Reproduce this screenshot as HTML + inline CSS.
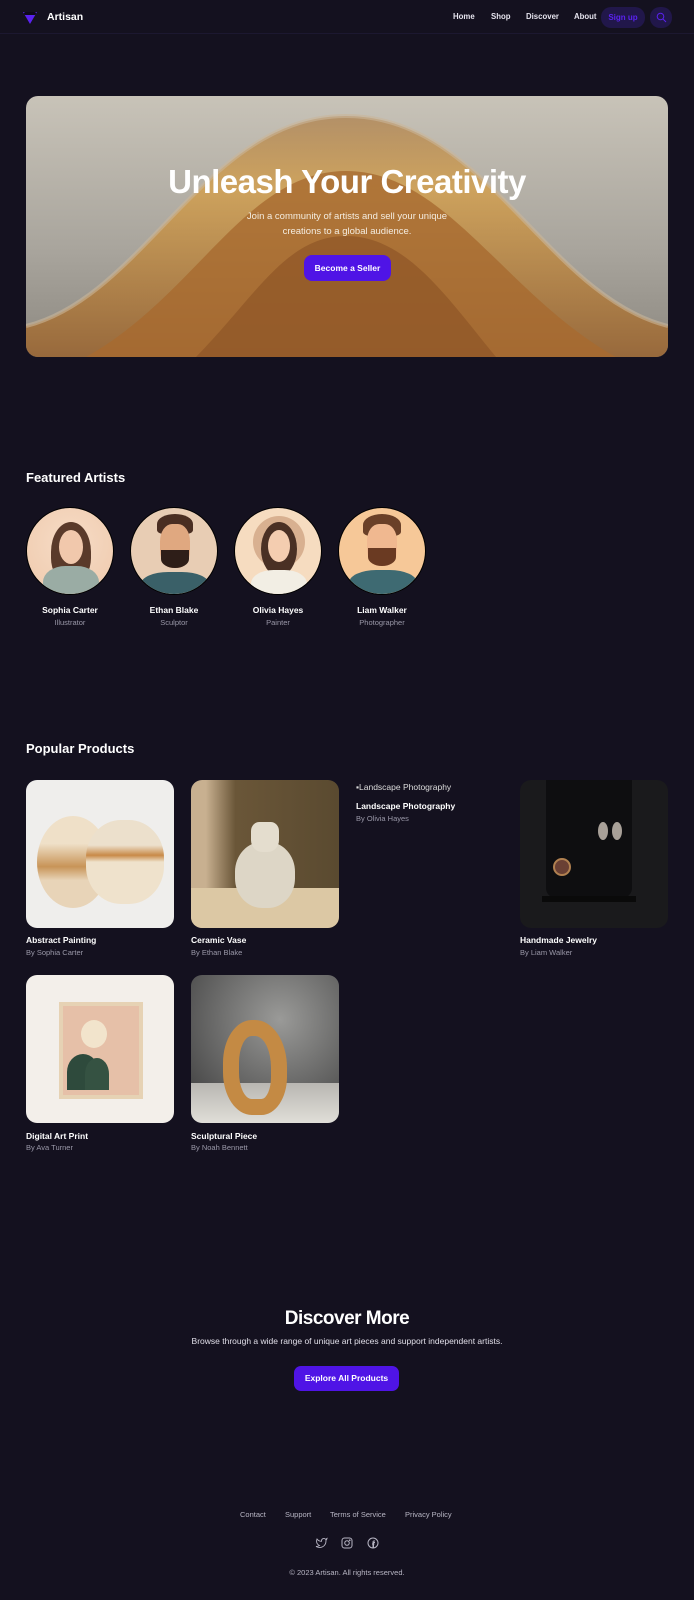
<!DOCTYPE html>
<html><head><meta charset="utf-8"><style>
*{margin:0;padding:0;box-sizing:border-box}
body{width:694px;height:1600px;background:#14111f;font-family:"Liberation Sans",sans-serif;color:#fff;position:relative;overflow:hidden}
.a{position:absolute}
.nav a{position:absolute;top:12px;font-size:7.8px;color:#e6e4ee;font-weight:bold}
h2{position:absolute;left:26px;font-size:13px;font-weight:bold}
.av{position:absolute;top:507px;width:88px;height:88px;border-radius:50%;border:1px solid #000;overflow:hidden}
.nm{position:absolute;top:605px;width:88px;text-align:center;font-size:8.5px;font-weight:bold}
.rl{position:absolute;top:618px;width:88px;text-align:center;font-size:7.5px;color:#9a98a8}
.card{position:absolute;width:148px;height:148px;border-radius:11px;overflow:hidden}
.t{position:absolute;font-size:8.5px;font-weight:bold}
.s{position:absolute;font-size:7.5px;color:#9a98a8}
.fl{position:absolute;top:1510px;font-size:7.5px;color:#b8b6c4}
</style></head><body>
<div class="a" style="left:0;top:0;width:694px;height:34px;border-bottom:1px solid #1c1830"></div>
<svg class="a" style="left:22px;top:10px" width="16" height="15" viewBox="0 0 16 15"><path d="M1 2 L15 2 L8 14 Z" fill="#5a22ef"/><rect x="2" y="2" width="12" height="3" rx="1.5" fill="#0d0a18"/></svg>
<div class="a" style="left:47px;top:11px;font-size:10.5px;font-weight:bold">Artisan</div>
<div class="nav"><a style="left:453px">Home</a><a style="left:491px">Shop</a><a style="left:526px">Discover</a><a style="left:574px">About</a></div>
<div class="a" style="left:601px;top:7px;width:44px;height:21px;border-radius:10px;background:#21174a;color:#5a22ef;font-size:8px;font-weight:bold;text-align:center;line-height:21px">Sign up</div>
<div class="a" style="left:650px;top:7px;width:22px;height:21px;border-radius:10px;background:#21174a"></div>
<svg class="a" style="left:656px;top:12px" width="11" height="11" viewBox="0 0 11 11"><circle cx="4.5" cy="4.5" r="3.3" stroke="#5a22ef" stroke-width="1" fill="none"/><path d="M7 7 L10 10" stroke="#5a22ef" stroke-width="1"/></svg>

<div class="a" style="left:26px;top:96px;width:642px;height:261px;border-radius:12px;overflow:hidden;background:linear-gradient(#c8c3b8,#a8a49c 60%,#8c8880)">
<svg width="642" height="261" viewBox="0 0 642 261" class="a" style="left:0;top:0">
<defs><linearGradient id="g" x1="0" y1="0" x2="0" y2="1"><stop offset="0" stop-color="#b0885a"/><stop offset=".3" stop-color="#d2a050"/><stop offset="1" stop-color="#9a6430"/></linearGradient></defs>
<path d="M0 230 C120 200 180 20 320 20 C460 20 520 200 642 230 L642 261 L0 261 Z" fill="url(#g)" opacity=".85"/>
<path d="M60 261 C170 200 220 75 320 75 C420 75 480 200 590 261 Z" fill="#a86a30" opacity=".8"/>
<path d="M170 261 C230 200 260 140 320 140 C380 140 420 200 470 261 Z" fill="#8e5626" opacity=".7"/>
<path d="M0 230 C120 200 180 20 320 20 C460 20 520 200 642 230" stroke="#c9b69a" stroke-width="4" fill="none" opacity=".6"/>
</svg>
<div class="a" style="left:0;top:67px;width:642px;text-align:center;font-size:33px;font-weight:bold;letter-spacing:-0.5px">Unleash Your Creativity</div>
<div class="a" style="left:0;top:113px;width:642px;text-align:center;font-size:9.5px;line-height:15px;color:#f4ece0">Join a community of artists and sell your unique<br>creations to a global audience.</div>
<div class="a" style="left:278px;top:159px;width:87px;height:26px;border-radius:8px;background:#4f14e6;text-align:center;line-height:26px;font-size:8.5px;font-weight:bold">Become a Seller</div>
</div>

<h2 style="top:470px">Featured Artists</h2>
<div class="av" style="left:26px;background:radial-gradient(circle at 50% 40%,#f6dcc6,#efc9ac)"><div class="a" style="left:24px;top:14px;width:40px;height:60px;border-radius:50% 50% 40% 40%;background:#5a3a2a"></div><div class="a" style="left:32px;top:22px;width:24px;height:34px;border-radius:50%;background:#f1c8ac"></div><div class="a" style="left:16px;top:58px;width:56px;height:40px;border-radius:40% 40% 0 0;background:#9aaca4"></div></div>
<div class="av" style="left:130px;background:#e8cdb4"><div class="a" style="left:26px;top:6px;width:36px;height:20px;border-radius:50% 50% 20% 20%;background:#4a2e22"></div><div class="a" style="left:29px;top:16px;width:30px;height:44px;border-radius:40%;background:#e0a880"></div><div class="a" style="left:30px;top:42px;width:28px;height:18px;border-radius:0 0 50% 50%;background:#2e1e18"></div><div class="a" style="left:10px;top:64px;width:68px;height:30px;border-radius:40% 40% 0 0;background:#3a6068"></div></div>
<div class="av" style="left:234px;background:#f6dcc0"><div class="a" style="left:18px;top:8px;width:52px;height:52px;border-radius:50%;background:#d8b090"></div><div class="a" style="left:26px;top:14px;width:36px;height:54px;border-radius:50%;background:#4a3024"></div><div class="a" style="left:33px;top:22px;width:22px;height:32px;border-radius:50%;background:#f4cdb0"></div><div class="a" style="left:16px;top:62px;width:56px;height:34px;border-radius:40% 40% 0 0;background:#f2eee4"></div></div>
<div class="av" style="left:338px;background:#f6c898"><div class="a" style="left:24px;top:6px;width:38px;height:22px;border-radius:50% 50% 20% 20%;background:#6a4028"></div><div class="a" style="left:28px;top:16px;width:30px;height:42px;border-radius:40%;background:#f0b890"></div><div class="a" style="left:29px;top:40px;width:28px;height:18px;border-radius:0 0 50% 50%;background:#6a3a22"></div><div class="a" style="left:10px;top:62px;width:68px;height:32px;border-radius:40% 40% 0 0;background:#3e6a72"></div></div>
<div class="nm" style="left:26px">Sophia Carter</div><div class="rl" style="left:26px">Illustrator</div>
<div class="nm" style="left:130px">Ethan Blake</div><div class="rl" style="left:130px">Sculptor</div>
<div class="nm" style="left:234px">Olivia Hayes</div><div class="rl" style="left:234px">Painter</div>
<div class="nm" style="left:338px">Liam Walker</div><div class="rl" style="left:338px">Photographer</div>

<h2 style="top:741px">Popular Products</h2>
<div class="card" style="left:26px;top:780px;background:#efeeec"><div class="a" style="left:11px;top:36px;width:72px;height:92px;border-radius:50%;background:linear-gradient(#efe0c8 30%,#c89458 55%,#e8d4b8 70%)"></div><div class="a" style="left:60px;top:40px;width:78px;height:84px;border-radius:45%;background:linear-gradient(#ece0cc 30%,#c88a48 42%,#efe2cc 50%)"></div></div>
<div class="card" style="left:191px;top:780px;background:linear-gradient(90deg,#c8b090 0 10%,#6a5638 30%,#5a4a30);"><div class="a" style="left:0;top:108px;width:148px;height:40px;background:#dcc8a4"></div><div class="a" style="left:44px;top:62px;width:60px;height:66px;border-radius:45%;background:#ddd6c6"></div><div class="a" style="left:60px;top:42px;width:28px;height:30px;border-radius:30% 30% 40% 40%;background:#e4ddce"></div></div>
<div class="a" style="left:356px;top:782px;font-size:8.5px;color:#ddd">▪Landscape Photography</div>
<div class="t" style="left:356px;top:801px">Landscape Photography</div><div class="s" style="left:356px;top:814px">By Olivia Hayes</div>
<div class="card" style="left:520px;top:780px;background:#1a1a1c"><div class="a" style="left:26px;top:0;width:86px;height:118px;border-radius:0 0 10px 10px;background:#0e0e10"></div><div class="a" style="left:22px;top:116px;width:94px;height:6px;background:#0a0a0a"></div><div class="a" style="left:33px;top:78px;width:18px;height:18px;border-radius:50%;border:2px solid #b08050;background:#6a4034"></div><div class="a" style="left:78px;top:42px;width:10px;height:18px;border-radius:50%;background:#a8a098"></div><div class="a" style="left:92px;top:42px;width:10px;height:18px;border-radius:50%;background:#a8a098"></div></div>
<div class="t" style="left:26px;top:935px">Abstract Painting</div><div class="s" style="left:26px;top:948px">By Sophia Carter</div>
<div class="t" style="left:191px;top:935px">Ceramic Vase</div><div class="s" style="left:191px;top:948px">By Ethan Blake</div>
<div class="t" style="left:520px;top:935px">Handmade Jewelry</div><div class="s" style="left:520px;top:948px">By Liam Walker</div>

<div class="card" style="left:26px;top:975px;background:#f3efea"><div class="a" style="left:33px;top:27px;width:84px;height:97px;background:#e6d2b4;padding:4px"><div style="width:100%;height:100%;background:#e6c0a8;position:relative"><div class="a" style="left:18px;top:14px;width:26px;height:28px;border-radius:50%;background:#f2e4cc"></div><div class="a" style="left:4px;top:48px;width:32px;height:36px;border-radius:50% 50% 0 0;background:#2e4a3c"></div><div class="a" style="left:22px;top:52px;width:24px;height:32px;border-radius:50% 50% 0 0;background:#355242"></div></div></div></div>
<div class="card" style="left:191px;top:975px;background:radial-gradient(circle at 60% 30%,#9a9a98,#4a4a4a 80%)"><div class="a" style="left:0;top:108px;width:148px;height:40px;background:linear-gradient(#b8b6b2,#e0ded8)"></div><div class="a" style="left:32px;top:45px;width:64px;height:95px;border-radius:45% 50% 40% 45%;border:16px solid #c48a44"></div></div>
<div class="t" style="left:26px;top:1131px">Digital Art Print</div><div class="s" style="left:26px;top:1143px">By Ava Turner</div>
<div class="t" style="left:191px;top:1131px">Sculptural Piece</div><div class="s" style="left:191px;top:1143px">By Noah Bennett</div>

<div class="a" style="left:0;top:1308px;width:694px;text-align:center;font-size:19px;font-weight:bold;letter-spacing:-0.5px">Discover More</div>
<div class="a" style="left:0;top:1336px;width:694px;text-align:center;font-size:8.5px;color:#e0dee8">Browse through a wide range of unique art pieces and support independent artists.</div>
<div class="a" style="left:294px;top:1366px;width:105px;height:25px;border-radius:7px;background:#4f14e6;text-align:center;line-height:25px;font-size:8.5px;font-weight:bold">Explore All Products</div>

<div class="fl" style="left:240px">Contact</div><div class="fl" style="left:285px">Support</div><div class="fl" style="left:330px">Terms of Service</div><div class="fl" style="left:405px">Privacy Policy</div>
<svg class="a" style="left:315px;top:1537px" width="13" height="12" viewBox="0 0 24 24" fill="none" stroke="#b8b6c4" stroke-width="1.8"><path d="M23 3a10.9 10.9 0 01-3.14 1.53 4.48 4.48 0 00-7.860 3v1A10.66 10.66 0 013 4s-4 9 5 13a11.64 11.64 0 01-7 2c9 5 20 0 20-11.5a4.5 4.5 0 00-.08-.83A7.72 7.72 0 0023 3z"/></svg>
<svg class="a" style="left:341px;top:1537px" width="12" height="12" viewBox="0 0 24 24" fill="none" stroke="#b8b6c4" stroke-width="2"><rect x="2" y="2" width="20" height="20" rx="5"/><circle cx="12" cy="12" r="4.5"/><circle cx="17.5" cy="6.5" r=".8"/></svg>
<svg class="a" style="left:367px;top:1537px" width="12" height="12" viewBox="0 0 24 24" fill="none" stroke="#b8b6c4" stroke-width="2"><circle cx="12" cy="12" r="10"/><path d="M13 22V11h3M16 8h-2a2 2 0 00-2 2v12M10 14h5"/></svg>
<div class="a" style="left:0;top:1568px;width:694px;text-align:center;font-size:7.5px;color:#b8b6c4">© 2023 Artisan. All rights reserved.</div>
</body></html>
